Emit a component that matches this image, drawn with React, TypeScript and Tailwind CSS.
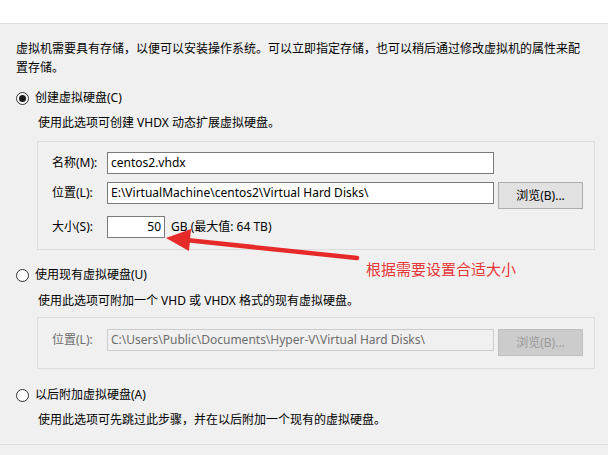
import React from "react";

const font = { fontFamily: '"Noto Sans", "Noto Sans CJK SC", sans-serif' };

function Radio({ checked }: { checked?: boolean }) {
  return (
    <span className="flex h-[13px] w-[13px] items-center justify-center rounded-full border border-[#333333] bg-white">
      {checked && <span className="h-[7px] w-[7px] rounded-full bg-[#1a1a1a]" />}
    </span>
  );
}

export default function App() {
  return (
    <div
      className="relative h-[455px] w-[608px] overflow-hidden bg-[#f0f0f0] text-[12px] leading-[16px] text-black"
      style={font}
    >
      <div className="h-[24px] border-b border-[#dfdfdf] bg-white" />

      <div className="flex flex-col pl-[16px] pr-[14px]">
        <p className="mt-[15px] leading-[19px]">
          虚拟机需要具有存储，以便可以安装操作系统。可以立即指定存储，也可以稍后通过修改虚拟机的属性来配
          <br />
          置存储。
        </p>

        {/* Option 1 */}
        <div className="mt-[13px] flex h-[16px] items-center gap-[6px]">
          <Radio checked />
          <span>创建虚拟硬盘(C)</span>
        </div>
        <div className="mt-[9px] h-[16px] pl-[22px]">使用此选项可创建 VHDX 动态扩展虚拟硬盘。</div>

        <div className="ml-[21px] mt-[10px] flex w-[558px] flex-col gap-[8px] border border-[#dcdcdc] pb-[11px] pl-[14px] pr-[11px] pt-[10px]">
          <div className="flex h-[22px] items-center">
            <span className="w-[55px]">名称(M):</span>
            <div className="flex h-[22px] w-[387px] items-center border border-[#7a7a7a] bg-white px-[3px]">
              centos2.vhdx
            </div>
          </div>
          <div className="flex h-[27px] items-start">
            <span className="flex h-[22px] w-[55px] items-center">位置(L):</span>
            <div className="flex h-[22px] w-[387px] items-center border border-[#7a7a7a] bg-white px-[3px]">
              E:\VirtualMachine\centos2\Virtual Hard Disks\
            </div>
            <button className="ml-[4px] flex h-[27px] w-[85px] items-center justify-center border border-[#adadad] bg-[#e1e1e1]">
              浏览(B)...
            </button>
          </div>
          <div className="-mt-[1px] flex h-[22px] items-center">
            <span className="w-[55px]">大小(S):</span>
            <div className="flex h-[22px] w-[58px] items-center justify-end border border-[#7a7a7a] bg-white px-[3px]">
              50
            </div>
            <span className="ml-[6px]">GB (最大值: 64 TB)</span>
          </div>
        </div>

        {/* Option 2 */}
        <div className="mt-[17px] flex h-[16px] items-center gap-[6px]">
          <Radio />
          <span>使用现有虚拟硬盘(U)</span>
        </div>
        <div className="mt-[10px] h-[16px] pl-[22px]">使用此选项可附加一个 VHD 或 VHDX 格式的现有虚拟硬盘。</div>

        <div className="ml-[21px] mt-[8px] flex w-[558px] flex-col border border-[#dcdcdc] pb-[12px] pl-[14px] pr-[11px] pt-[11px]">
          <div className="flex h-[27px] items-start">
            <span className="flex h-[22px] w-[55px] items-center text-[#6d6d6d]">位置(L):</span>
            <div className="flex h-[22px] w-[387px] items-center border border-[#cccccc] bg-[#f0f0f0] px-[3px] text-[#6d6d6d]">
              C:\Users\Public\Documents\Hyper-V\Virtual Hard Disks\
            </div>
            <button className="ml-[4px] flex h-[27px] w-[85px] items-center justify-center border border-[#bfbfbf] bg-[#cccccc] text-[#9a9a9a]">
              浏览(B)...
            </button>
          </div>
        </div>

        {/* Option 3 */}
        <div className="mt-[18px] flex h-[16px] items-center gap-[6px]">
          <Radio />
          <span>以后附加虚拟硬盘(A)</span>
        </div>
        <div className="mt-[9px] h-[16px] pl-[22px]">使用此选项可先跳过此步骤，并在以后附加一个现有的虚拟硬盘。</div>
      </div>

      <div className="absolute left-0 right-0 top-[444px] h-[11px] border-t border-[#dfdfdf] bg-[#f0f0f0]" />

      {/* Annotation */}
      <svg className="absolute left-0 top-0" width="608" height="455" viewBox="0 0 608 455">
        <line x1="357" y1="258" x2="186" y2="240" stroke="#e62a2a" strokeWidth="4.5" strokeLinecap="round" />
        <polygon points="166,238 191,229 189,251" fill="#e62a2a" />
      </svg>
      <div
        className="absolute left-[366px] top-[259px] text-[15px] leading-[20px] text-[#e63838]"
        style={{ fontFamily: '"Noto Sans CJK SC", sans-serif' }}
      >
        根据需要设置合适大小
      </div>
    </div>
  );
}
